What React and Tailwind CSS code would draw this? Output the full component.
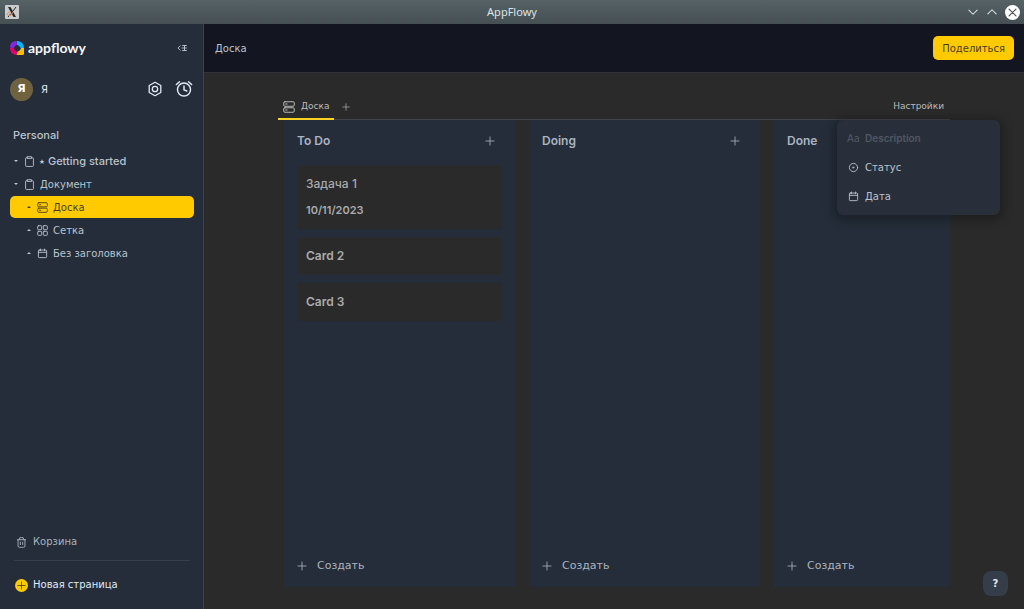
import React, { useState } from "react";

const Svg = ({ size = "size-3", children, box = "0 0 16 16", width = 1.3 }) => (
  <svg
    viewBox={box}
    className={`${size} shrink-0`}
    fill="none"
    stroke="currentColor"
    strokeWidth={width}
    strokeLinecap="round"
    strokeLinejoin="round"
    aria-hidden="true"
  >
    {children}
  </svg>
);

const DocIcon = ({ size }) => (
  <Svg size={size}>
    <path d="M5 2.500H3.500A1.200 1.200 0 0 0 2.300 3.700V14a1.200 1.200 0 0 0 1.200 1.200h9A1.200 1.200 0 0 0 13.700 14V3.700A1.200 1.200 0 0 0 12.500 2.500H11" />
    <path d="M5 1h6v2.500H5z" />
  </Svg>
);

const BoardIcon = ({ size }) => (
  <Svg size={size}>
    <rect x="1" y="1" width="14" height="6" rx="1.500" />
    <rect x="1" y="9" width="14" height="6" rx="1.500" />
    <path d="M3.500 4h2M3.500 12h2" />
  </Svg>
);

const GridIcon = ({ size }) => (
  <Svg size={size}>
    <rect x="1" y="1" width="5.800" height="5.800" rx="1" />
    <rect x="9.200" y="1" width="5.800" height="5.800" rx="1" />
    <rect x="1" y="9.200" width="5.800" height="5.800" rx="1" />
    <rect x="9.200" y="9.200" width="5.800" height="5.800" rx="1" />
  </Svg>
);

const DateIcon = ({ size }) => (
  <Svg size={size}>
    <rect x="2" y="3" width="12" height="11" rx="1.200" />
    <path d="M2 6.300h12M5 1.500v2.500M11 1.500v2.500" />
  </Svg>
);

const StatusIcon = ({ size }) => (
  <Svg size={size}>
    <circle cx="8" cy="8" r="6" />
    <path d="M6.800 7.400h2.400L8 9z" fill="currentColor" strokeWidth="0.800" />
  </Svg>
);

const PlusIcon = ({ size }) => (
  <Svg size={size}>
    <path d="M8 1.500v13M1.500 8h13" />
  </Svg>
);

const TrashIcon = ({ size }) => (
  <Svg size={size}>
    <path d="M2 4h12M4.700 4L5.500 1h5l.8 3M3 4v9a2 2 0 0 0 2 2h6a2 2 0 0 0 2-2V4M6.300 7.500V11M9.700 7.500V11" />
  </Svg>
);

const pages = [
  { name: "⭑ Getting started", icon: DocIcon, open: true, latin: true },
  { name: "Документ", icon: DocIcon, open: true },
  { name: "Доска", icon: BoardIcon, child: true },
  { name: "Сетка", icon: GridIcon, child: true },
  { name: "Без заголовка", icon: DateIcon, child: true },
];

const columns = [
  {
    name: "To Do",
    cards: [
      { title: "Задача 1", date: "10/11/2023" },
      { title: "Card 2" },
      { title: "Card 3" },
    ],
  },
  { name: "Doing", cards: [] },
  { name: "Done", cards: [] },
];

const TitleBar = () => (
  <div className="relative flex h-6 shrink-0 items-center justify-between bg-linear-to-b from-[#566266] to-[#454f54] pr-1 pl-[5px] text-[#dde3e6]">
    <svg viewBox="0 0 14 14" className="size-[14px]" aria-hidden="true">
      <rect width="14" height="14" rx="1" fill="#c9cbcc" />
      <path d="M3 2h2.500L11 12H8.500z" fill="#262626" />
      <path d="M11 2L8 6M6 8.500L3 12" stroke="#262626" strokeWidth="1" />
      <path d="M5.500 6.500C2 8 1.500 10 3.500 10.500S8 9 8 7" fill="none" stroke="#d98a63" strokeWidth="1" />
    </svg>
    <h1 className="absolute inset-x-0 text-center font-['Noto_Sans',sans-serif] text-[11px] leading-6">
      AppFlowy
    </h1>
    <div className="relative flex items-center gap-[7px]">
      <button type="button" aria-label="Minimize">
        <Svg size="size-3" width={1.4}>
          <path d="M2.500 5.500L8 11l5.500-5.500" />
        </Svg>
      </button>
      <button type="button" aria-label="Maximize">
        <Svg size="size-3" width={1.4}>
          <path d="M2.500 10.500L8 5l5.500 5.500" />
        </Svg>
      </button>
      <button type="button" aria-label="Close" className="rounded-full bg-white text-[#485257]">
        <Svg size="size-[15px]" width={1.2}>
          <path d="M4.300 4.300l7.400 7.400M11.700 4.300l-7.400 7.400" />
        </Svg>
      </button>
    </div>
  </div>
);

const Logo = () => (
  <div className="flex items-center gap-1">
    <svg viewBox="0 0 28 28" className="size-[14px]" aria-hidden="true">
      <path d="M12.500 0C5 0 0 5 0 12.500l7 3c1-4 3-6 7-8z" fill="#8427e0" />
      <path d="M13.500 0C21 0 28 5 28 13l-6.500 2.500c-1-4-3-6-7.500-8z" fill="#00b5ff" />
      <path d="M0 13.500C0 22 5 28 14 28l1-6.500c-4-1-6-3-8-7.500z" fill="#e3006d" />
      <path d="M28 13.500V25a3 3 0 0 1-3 3H13.500l1-6.500c4-1 6-3 8-7.500z" fill="#ffbd00" />
    </svg>
    <span className="font-[Lato,sans-serif] text-sm leading-4 font-bold text-[#f4f6fa]">
      appflowy
    </span>
  </div>
);

const Sidebar = ({ active, setActive }) => (
  <aside className="flex w-[204px] shrink-0 flex-col border-r border-[#4a3c42] bg-[#242d39] pr-[9px] pb-4 pl-[10px]">
    <div className="flex h-12 items-center justify-between pr-[3px]">
      <Logo />
      <button type="button" aria-label="Collapse sidebar" className="p-1 text-[#bbc3cd]">
        <Svg size="size-[10px]" width={1.5}>
          <path d="M5 4.500L1.500 8 5 11.500M9 4h6M8 8h7M9 12h6M12 4v8" />
        </Svg>
      </button>
    </div>

    <div className="flex h-[34px] items-center pr-px text-[#e2e9f7]">
      <span className="flex size-[23px] items-center justify-center rounded-full bg-[#6f623f] text-[11px] font-bold text-white">
        Я
      </span>
      <span className="ml-2 flex-1 text-[10px]">Я</span>
      <button type="button" aria-label="Settings" className="mr-3">
        <Svg size="size-4" width={1.3}>
          <path d="M8 1.300l5.800 3.200v7L8 14.700l-5.800-3.200v-7z" />
          <circle cx="8" cy="8" r="2.700" />
        </Svg>
      </button>
      <button type="button" aria-label="Reminders">
        <Svg size="size-[18px]" width={1.3}>
          <circle cx="8" cy="8.500" r="5.800" />
          <path d="M8 5.300v3.500l2.500 1M1.200 4L4 1.500M14.800 4L12 1.500" />
        </Svg>
      </button>
    </div>

    <h2 className="mt-[21px] px-[3px] font-[Inter,sans-serif] text-[11px] leading-4 font-medium text-[#bbc3cd]">
      Personal
    </h2>
    <nav className="mt-[7px] flex flex-col gap-px">
      {pages.map((page) => {
        const Icon = page.icon;
        return (
          <a
            key={page.name}
            href="#"
            onClick={(e) => {
              e.preventDefault();
              setActive(page.name);
            }}
            className={`flex h-[22px] items-center rounded-[5px] text-[10px] ${
              page.child ? "pl-[17px]" : "pl-1"
            } ${active === page.name ? "bg-[#ffca00] text-[#4a3f1c]" : "text-[#bbc3cd]"}`}
          >
            <svg viewBox="0 0 4 4" className="mr-[6px] size-1" fill="currentColor" aria-hidden="true">
              <path d={page.open ? "M0 1h4L2 3z" : "M0 3h4L2 1z"} />
            </svg>
            <Icon size="size-[11px]" />
            <span className={page.latin ? "ml-1 font-[Inter,sans-serif] text-[11px] font-medium" : "ml-[5px]"}>
              {page.name}
            </span>
          </a>
        );
      })}
    </nav>

    <div className="mt-auto">
      <button type="button" className="flex items-center gap-[6px] px-[6px] text-[10px] leading-4 text-[#aab3be]">
        <TrashIcon size="size-[11px]" />
        Корзина
      </button>
      <hr className="mx-[4px] mt-[10px] border-[#363f4b]" />
      <button type="button" className="mt-4 flex items-center gap-[5px] px-[5px] text-[10px] leading-4 font-medium text-[#e2e9f7]">
        <span className="rounded-full bg-[#ffca00] p-[2px] text-[#333322]">
          <PlusIcon size="size-[9px]" />
        </span>
        Новая страница
      </button>
    </div>
  </aside>
);

const Card = ({ card }) => (
  <article className="rounded-sm bg-[#2a2a2a] px-[9px] py-[11px] font-[Inter,'DejaVu_Sans',sans-serif] text-xs leading-4 font-semibold text-[#a9abad]">
    <h4 className={card.date ? "font-medium" : ""}>{card.title}</h4>
    {card.date && <p className="mt-[10px] text-[11px]">{card.date}</p>}
  </article>
);

const Column = ({ column }) => (
  <section className="flex w-[231px] shrink-0 flex-col bg-[#242d39] px-[13px] pb-[13px] text-[#abb4c1]">
    <div className="flex h-[41px] items-center justify-between pr-[7px]">
      <h3 className="font-[Inter,sans-serif] text-xs font-semibold">{column.name}</h3>
      <button type="button" aria-label={`Add to ${column.name}`}>
        <PlusIcon size="size-[10px]" />
      </button>
    </div>
    <div className="mt-1 flex flex-1 flex-col gap-2">
      {column.cards.map((card) => (
        <Card key={card.title} card={card} />
      ))}
    </div>
    <button type="button" className="flex items-center gap-[10px] text-[11px] leading-4">
      <PlusIcon size="size-[10px]" />
      Создать
    </button>
  </section>
);

const SettingsMenu = () => (
  <div className="absolute top-[25px] -right-[50px] z-10 w-[163px] rounded-md bg-[#292f3a] py-1 text-[10px] shadow-[0_2px_10px_4px_rgba(0,0,0,0.25)]">
    <button type="button" disabled className="flex h-[29px] w-full items-center px-[10px] text-[#505763]">
      <span className="w-[18px] text-left">Aa</span>
      <span className="font-[Inter,sans-serif] font-semibold">Description</span>
    </button>
    <button type="button" className="flex h-[29px] w-full items-center gap-[6px] px-[11px] text-[#bbc3cd]">
      <StatusIcon size="size-[11px]" />
      Статус
    </button>
    <button type="button" className="flex h-[29px] w-full items-center gap-[6px] px-[11px] text-[#bbc3cd]">
      <DateIcon size="size-[11px]" />
      Дата
    </button>
  </div>
);

export default function App() {
  const [active, setActive] = useState("Доска");
  const [menuOpen, setMenuOpen] = useState(true);

  return (
    <div className="flex h-screen flex-col overflow-hidden bg-[#2a2a2a] font-['DejaVu_Sans',sans-serif]">
      <TitleBar />
      <div className="flex min-h-0 flex-1">
        <Sidebar active={active} setActive={setActive} />
        <main className="flex min-w-0 flex-1 flex-col">
          <header className="flex h-[49px] shrink-0 items-center justify-between border-b border-[#303238] bg-[#131620] pr-[10px] pl-[11px] text-[10px]">
            <span className="text-[#bbc3cd]">Доска</span>
            <button type="button" className="h-6 rounded-[5px] bg-[#ffca00] px-[9px] text-[#4a3f1c]">
              Поделиться
            </button>
          </header>

          <div className="flex min-h-0 flex-1 flex-col px-[74px] pt-[22px] pb-[22px]">
            <div className="flex h-[25px] shrink-0 justify-between border-b border-[#404349] text-[9px] text-[#bbb]">
              <div className="flex">
                <button type="button" className="-mb-px flex items-center gap-[6px] border-b-2 border-[#ffd022] px-[5px]">
                  <BoardIcon size="size-3" />
                  Доска
                </button>
                <button type="button" aria-label="Add view" className="px-2">
                  <PlusIcon size="size-2" />
                </button>
              </div>
              <div className="relative flex items-center pr-[6px]">
                <button type="button" onClick={() => setMenuOpen(!menuOpen)}>
                  Настройки
                </button>
                {menuOpen && <SettingsMenu />}
              </div>
            </div>
            <div className="ml-[6px] flex min-h-0 flex-1 gap-[14px] overflow-hidden">
              {columns.map((column) => (
                <Column key={column.name} column={column} />
              ))}
            </div>
          </div>
        </main>
      </div>
      <button
        type="button"
        aria-label="Help"
        className="absolute right-4 bottom-[13px] size-[25px] rounded-lg bg-[#363d4a] text-[10px] font-bold text-[#e2e9f7]"
      >
        ?
      </button>
    </div>
  );
}
